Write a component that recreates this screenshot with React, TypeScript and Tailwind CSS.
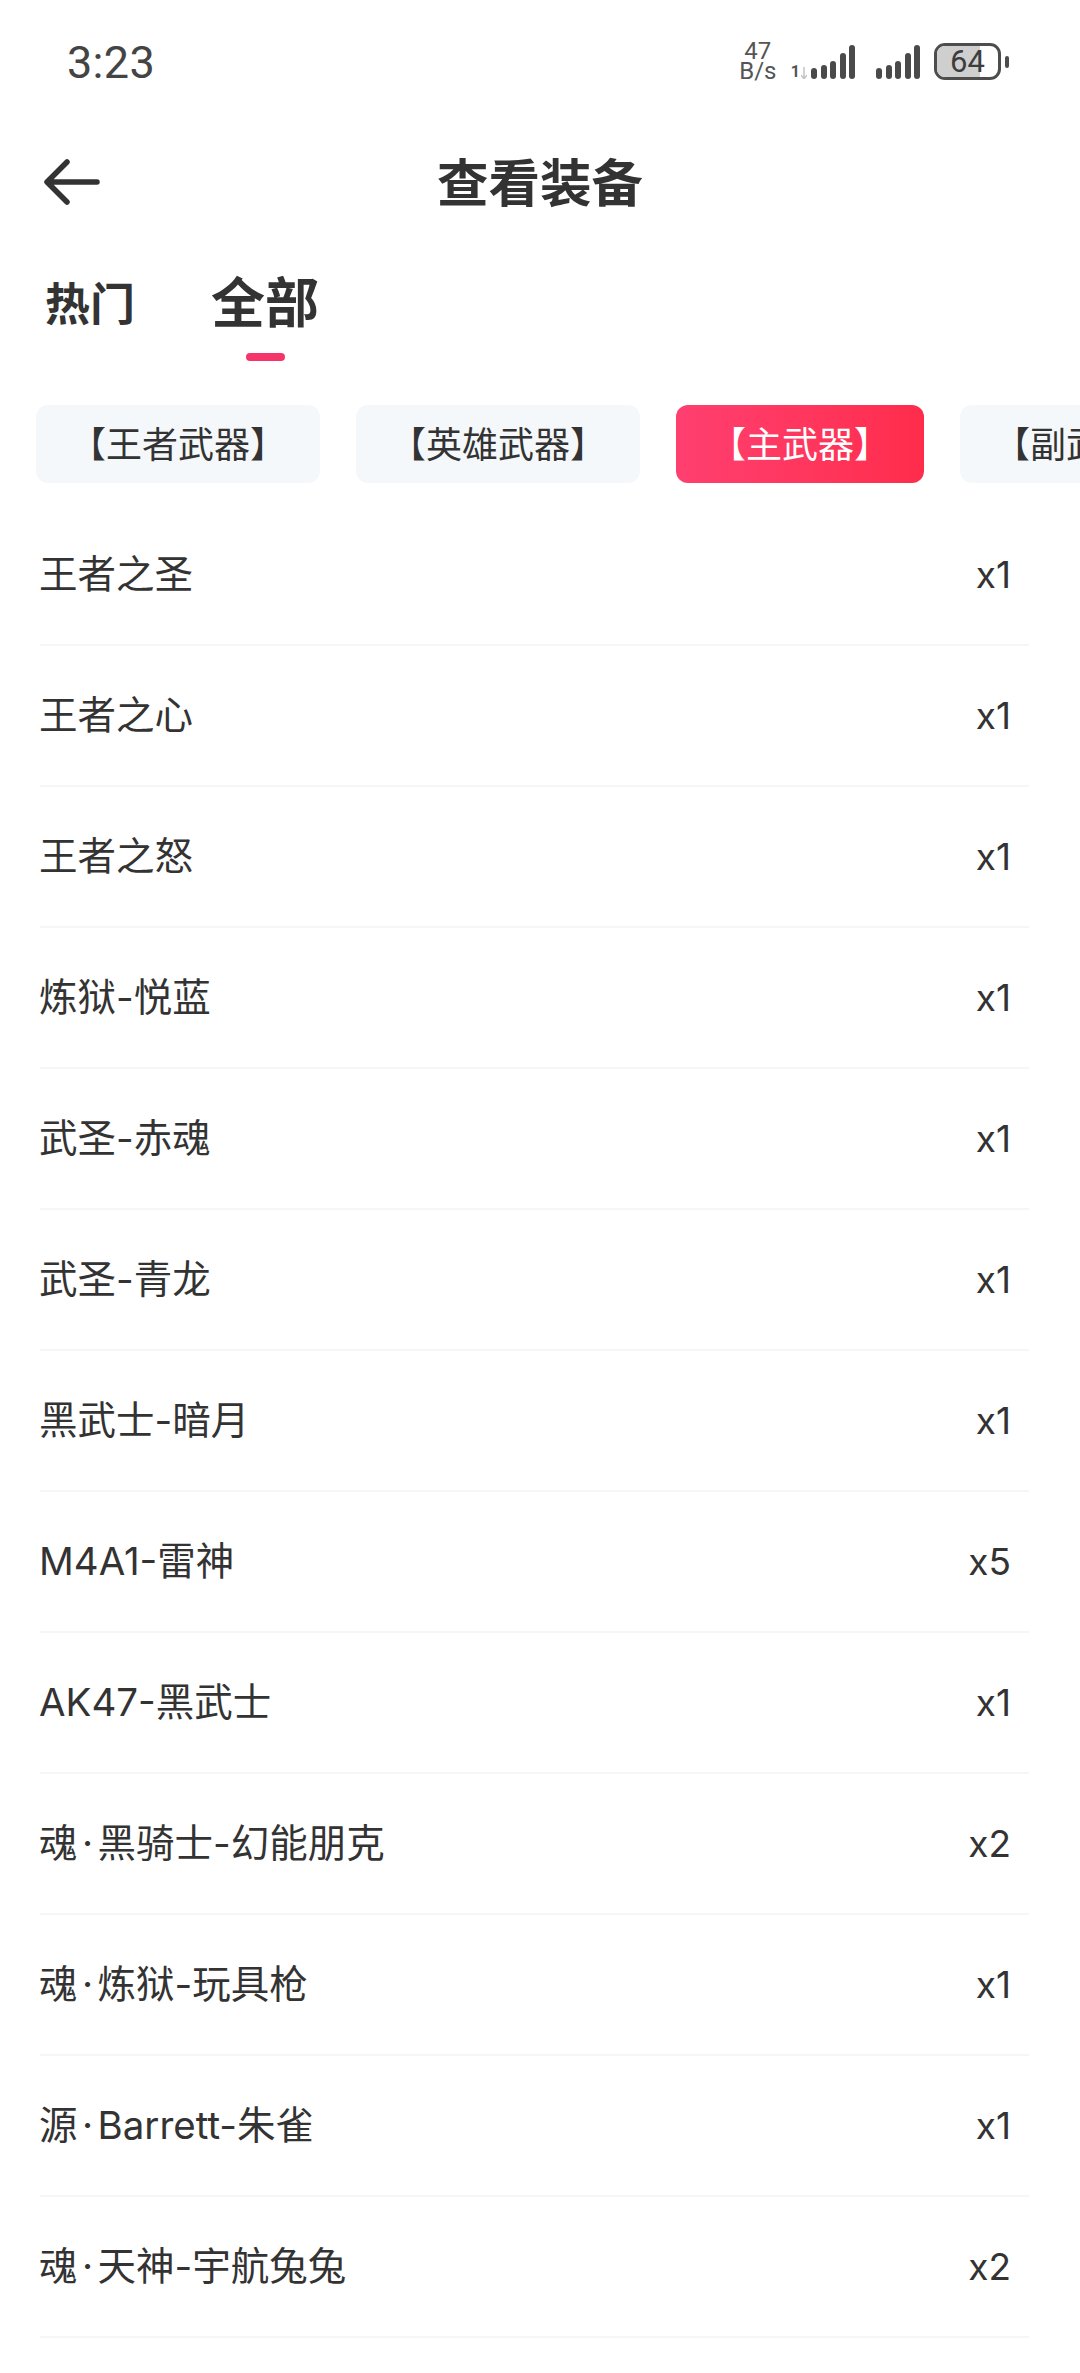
const font = "font-['Inter','Noto_Sans_CJK_SC',sans-serif]"

const rows = [
  ["王者之圣", "x1"],
  ["王者之心", "x1"],
  ["王者之怒", "x1"],
  ["炼狱-悦蓝", "x1"],
  ["武圣-赤魂", "x1"],
  ["武圣-青龙", "x1"],
  ["黑武士-暗月", "x1"],
  ["M4A1-雷神", "x5"],
  ["AK47-黑武士", "x1"],
  ["魂·黑骑士-幻能朋克", "x2"],
  ["魂·炼狱-玩具枪", "x1"],
  ["源·Barrett-朱雀", "x1"],
  ["魂·天神-宇航兔兔", "x2"],
]

const chips = ["【王者武器】", "【英雄武器】", "【主武器】", "【副武器】"]

function Signal() {
  return (
    <div className="flex h-[34px] items-end gap-[3.5px]">
      {[11, 14, 18, 26, 34].map((h) => (
        <div key={h} className="w-[6px] rounded-full bg-[#4a4a4a]" style={{ height: h }} />
      ))}
    </div>
  )
}

function StatusBar() {
  return (
    <div className="flex h-[124px] items-start justify-between pl-[67px] pr-[71px] pt-[33px]">
      <span className="font-['Roboto',sans-serif] text-[45px] leading-[60px] tracking-[0.3px] text-[#444]">3:23</span>
      <div className="flex items-start pt-[10px]">
        <div className="-mt-[2px] flex w-[36px] flex-col items-center font-['Roboto',sans-serif] text-[24px] leading-[20px] text-[#555]">
          <span>47</span>
          <span>B/s</span>
        </div>
        <div className="ml-[15px] mt-[2px] flex items-end">
          <span className="mr-[1px] font-['Roboto',sans-serif] text-[16px] font-bold leading-[14px] text-[#555]">1</span>
          <svg width="6" height="12" viewBox="0 0 6 12" className="mr-[4px]">
            <path d="M3 0v12M0 8l3 4 3-4" stroke="#c4c4c4" strokeWidth="1.5" fill="none" />
          </svg>
          <Signal />
        </div>
        <div className="ml-[21px] mt-[2px]">
          <Signal />
        </div>
        <div className="relative ml-[14px] h-[37px] w-[67px] overflow-hidden rounded-[11px] border-[3px] border-[#4d4d4d]">
          <div className="absolute inset-y-0 left-0 w-[43px] bg-[#cfcfcf]" />
          <span className="absolute inset-0 text-center font-['Roboto',sans-serif] text-[31px] leading-[31px] text-[#3d3d3d]">64</span>
        </div>
        <div className="ml-[4px] mt-[13px] h-[12px] w-[4px] rounded-full bg-[#4d4d4d]" />
      </div>
    </div>
  )
}

// the middle dot sits in a slot of its own, the font's advance is too narrow
function ItemName({ name }: { name: string }) {
  const parts = name.split("·")
  if (parts.length === 1) return <span className="-ml-[1px] text-[38.5px] leading-none">{name}</span>
  return (
    <span className="-ml-[1px] text-[38.5px] leading-none">
      {parts[0]}
      <span className="inline-block w-[20px] text-center">·</span>
      {parts[1]}
    </span>
  )
}

export default function App() {
  return (
    <div className={`h-[2373px] w-[1080px] overflow-hidden bg-white text-[#333] ${font}`}>
      <StatusBar />
      <header className="relative flex h-[116px] items-center justify-center pt-[4px]">
        <svg width="60" height="50" viewBox="0 0 60 50" fill="none" className="absolute left-[42px] top-[33px]">
          <path d="M25 5 5 25l20 20M6 25h49" stroke="#333" strokeWidth="5.5" strokeLinecap="round" strokeLinejoin="round" />
        </svg>
        <h1 className="text-[51.5px] font-bold leading-none">查看装备</h1>
      </header>
      <div className="flex h-[143px] items-start gap-[76px] pl-[45px] pt-[33px] font-bold">
        <span className="mt-[4px] text-[45px] leading-[56px]">热门</span>
        <div className="flex flex-col items-center">
          <span className="text-[54px] leading-[62px]">全部</span>
          <div className="mt-[18px] h-[8px] w-[39px] rounded-full bg-[#f5356a]" />
        </div>
      </div>
      <div className="flex h-[122px] gap-[36px] overflow-hidden pl-[36px] pt-[22px]">
        {chips.map((c, i) => (
          <div
            key={c}
            className={
              i === 2
                ? "flex h-[78px] shrink-0 items-center rounded-[12px] bg-gradient-to-r from-[#ff3f70] to-[#ff2c4b] px-[34px] pt-[1px] text-[36px] text-white"
                : "flex h-[78px] shrink-0 items-center rounded-[12px] bg-[#f5f8fa] px-[34px] pt-[1px] text-[36px] text-[#333]"
            }
          >
            {c}
          </div>
        ))}
      </div>
      <div className="ml-[40px] w-[989px]">
        {rows.map(([name, qty]) => (
          <div key={name} className="flex h-[141px] items-center justify-between border-b-2 border-[#f6f6f6]">
            <ItemName name={name} />
            <span className="mr-[18px] text-[37px] leading-none">{qty}</span>
          </div>
        ))}
      </div>
    </div>
  )
}
